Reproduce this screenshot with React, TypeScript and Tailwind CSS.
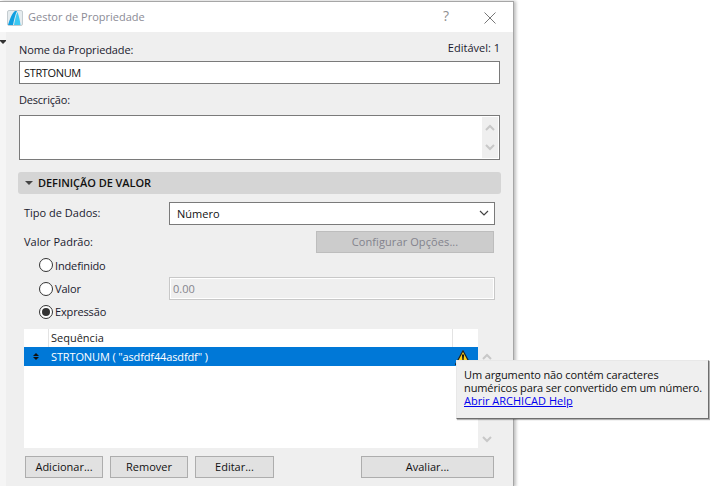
import React from 'react'

const Chevron = ({ up, className }: { up?: boolean; className?: string }) => (
  <svg width="10" height="7" viewBox="0 0 10 7" className={className}>
    <path
      d={up ? 'M1 6 L5 2 L9 6' : 'M1 1 L5 5 L9 1'}
      fill="none"
      stroke="currentColor"
      strokeWidth="2"
    />
  </svg>
)

const Radio = ({ checked, label }: { checked?: boolean; label: string }) => (
  <div className="flex items-center gap-[2px]">
    <div className="flex h-[14px] w-[14px] items-center justify-center rounded-full border border-[#333] bg-white">
      {checked && <div className="h-[8px] w-[8px] rounded-full bg-[#333]" />}
    </div>
    <span className="tracking-[-0.15px]">{label}</span>
  </div>
)

const Button = ({ text, className }: { text: string; className: string }) => (
  <button className={`flex h-[22px] items-center justify-center border border-[#adadad] bg-[#e1e1e1] pb-[2px] text-[#111] ${className}`}>
    {text}
  </button>
)

const Logo = () => (
  <svg width="16" height="16" viewBox="0 0 16 16">
    <rect x="0.5" y="0.5" width="15" height="15" rx="1.5" fill="#e6ecef" stroke="#c4ccd0" />
    <path d="M1 15 C3 9 5 3 8 1 L10 1 C8 5 7 10 6 15 Z" fill="#0f9ee0" />
    <path d="M7 15 C8 10 9 5 10.5 2 C12 6 13 11 13.5 15 Z" fill="#3cc8f2" />
  </svg>
)

const Warning = () => (
  <svg width="16" height="15" viewBox="0 0 16 15">
    <path d="M8 0.8 L15.4 14.4 L0.6 14.4 Z" fill="#fcd116" stroke="#222" strokeWidth="1.2" strokeLinejoin="round" />
    <path d="M6.9 4.5 H9.1 L8.6 10 H7.4 Z" fill="#111" />
    <rect x="7" y="11" width="2" height="2" fill="#111" />
  </svg>
)

export default function App() {
  return (
    <div className="relative flex h-[486px] w-[710px] overflow-hidden bg-white pt-px font-['Open_Sans','Noto_Sans',sans-serif] text-[11px] leading-none text-[#1a1a2e]">
      <div className="flex h-[486px] w-[514px] flex-col border-t border-r border-[#a6a6a6] bg-white shadow-[2px_0_3px_rgba(0,0,0,0.25)]">
        <div className="flex h-[30px] shrink-0 items-center pl-[7px] pt-px">
          <Logo />
          <span className="relative bottom-px ml-[5px] text-[#8b8b96]">Gestor de Propriedade</span>
          <span className="relative bottom-[2px] ml-auto text-[14px] text-[#8f8f8f]">?</span>
          <svg width="12" height="12" viewBox="0 0 12 12" className="ml-[35px] mr-[17px] text-[#777]">
            <path d="M0.5 0.5 L11.5 11.5 M11.5 0.5 L0.5 11.5" stroke="currentColor" fill="none" />
          </svg>
        </div>

        <div className="flex min-h-0 flex-1">
          <div className="w-[6px] shrink-0 bg-[#f5f5f5]">
            <div className="ml-[-1px] mt-[8px] h-0 w-0 border-x-[4px] border-t-[4px] border-x-transparent border-t-[#333]" />
          </div>
          <div className="flex flex-1 flex-col bg-[#efefef] pl-[13px] pr-[13px]">
            <div className="flex h-[29px] items-end justify-between pb-[6px]">
              <span className="tracking-[-0.1px]">Nome da Propriedade:</span>
              <span className="relative bottom-[2px]">Editável: 1</span>
            </div>
            <input
              readOnly
              value="STRTONUM"
              className="h-[23px] border border-[#7a7a7a] bg-white pl-[4px] text-[11px] tracking-[-0.35px] text-[#111] outline-none"
            />
            <div className="flex h-[31px] items-center pb-px tracking-[-0.2px]">Descrição:</div>
            <div className="flex h-[45px] justify-end border border-[#7a7a7a] bg-white p-px">
              <div className="flex w-[16px] flex-col items-center justify-between bg-[#efefef] py-[7px] text-[#c8c8c8]">
                <Chevron up />
                <Chevron />
              </div>
            </div>

            <div className="-mx-px mt-[12px] flex h-[22px] items-center rounded-[3px] bg-[#d5d5d5] pb-px pl-[7px] font-semibold text-[#111]">
              <div className="h-0 w-0 border-x-[4px] border-t-[4px] border-x-transparent border-t-[#444]" />
              <span className="ml-[5px] tracking-[-0.05px]">DEFINIÇÃO DE VALOR</span>
            </div>

            <div className="mt-[8px] flex h-[23px] items-center pl-[5px]">
              <span className="w-[145px] pb-[3px]">Tipo de Dados:</span>
              <div className="flex h-[23px] w-[326px] items-center justify-between border border-[#7a7a7a] bg-white pl-[7px] pr-[5px] text-[#111]">
                <span>Número</span>
                <Chevron className="text-[#444] [&>path]:[stroke-width:1.2]" />
              </div>
            </div>

            <div className="mt-[6px] flex h-[22px] items-center justify-between pl-[5px]">
              <span className="pb-[2px]">Valor Padrão:</span>
              <div className="mr-[6px] flex h-[22px] w-[178px] items-center justify-center border border-[#bdbdbd] bg-[#cccccc] pb-[2px] tracking-[0.1px] text-[#83838d]">
                Configurar Opções...
              </div>
            </div>

            <div className="flex h-[24px] items-center pl-[20px]">
              <Radio label="Indefinido" />
            </div>
            <div className="flex h-[23px] items-center pl-[20px]">
              <div className="w-[130px]">
                <Radio label="Valor" />
              </div>
              <div className="flex h-[23px] w-[326px] items-center border border-[#c8c8c8] bg-[#efefef] pl-[3px] text-[#85858d] shadow-[inset_0_0_0_1px_#fff]">
                0.00
              </div>
            </div>
            <div className="flex h-[23px] items-center pl-[20px]">
              <Radio checked label="Expressão" />
            </div>

            <div className="ml-[5px] mt-[6px] flex h-[119px]">
              <div className="flex w-[454px] flex-col bg-white">
                <div className="flex h-[18px] shrink-0">
                  <div className="w-[25px] border-r border-[#e3e3e3]" />
                  <div className="flex flex-1 items-center pb-[2px] pl-[2px] text-[#222]">Sequência</div>
                  <div className="w-[26px] border-l border-[#e3e3e3]" />
                </div>
                <div className="flex h-[19px] shrink-0 items-center bg-[#0078d7] text-white">
                  <div className="flex w-[25px] flex-col items-center gap-px pr-[2px]">
                    <div className="h-0 w-0 border-x-[3px] border-b-[3px] border-x-transparent border-b-[#111]" />
                    <div className="h-0 w-0 border-x-[3px] border-t-[3px] border-x-transparent border-t-[#111]" />
                  </div>
                  <span className="pl-[2px] tracking-[-0.13px]">STRTONUM ( "asdfdf44asdfdf" )</span>
                  <div className="ml-auto mr-[7px] mt-[2px]">
                    <Warning />
                  </div>
                </div>
              </div>
              <div className="flex w-[17px] flex-col items-center justify-between pb-[5px] pt-[24px] text-[#c8c8c8]">
                <Chevron up />
                <Chevron />
              </div>
            </div>

            <div className="ml-[6px] mt-[8px] flex pr-[6px]">
              <Button text="Adicionar..." className="w-[78px]" />
              <Button text="Remover" className="ml-[7px] w-[78px]" />
              <Button text="Editar..." className="ml-[7px] w-[79px]" />
              <Button text="Avaliar..." className="ml-auto w-[133px]" />
            </div>
          </div>
        </div>
      </div>

      <div className="absolute left-[456px] top-[360px] h-[59px] w-[253px] border border-t-[#e8e8e8] border-l-[#e8e8e8] border-r-[#6e6e6e] border-b-[#6e6e6e] bg-[#efefef] pl-[7px] pt-[7px] text-[#111] shadow-[1px_1px_1px_rgba(0,0,0,0.3)]">
        <div className="leading-[13px] tracking-[-0.11px] whitespace-nowrap">Um argumento não contém caracteres</div>
        <div className="leading-[13px] tracking-[-0.11px] whitespace-nowrap">numéricos para ser convertido em um número.</div>
        <div className="leading-[13px] whitespace-nowrap text-[#0000ee] underline">Abrir ARCHICAD Help</div>
      </div>
    </div>
  )
}
